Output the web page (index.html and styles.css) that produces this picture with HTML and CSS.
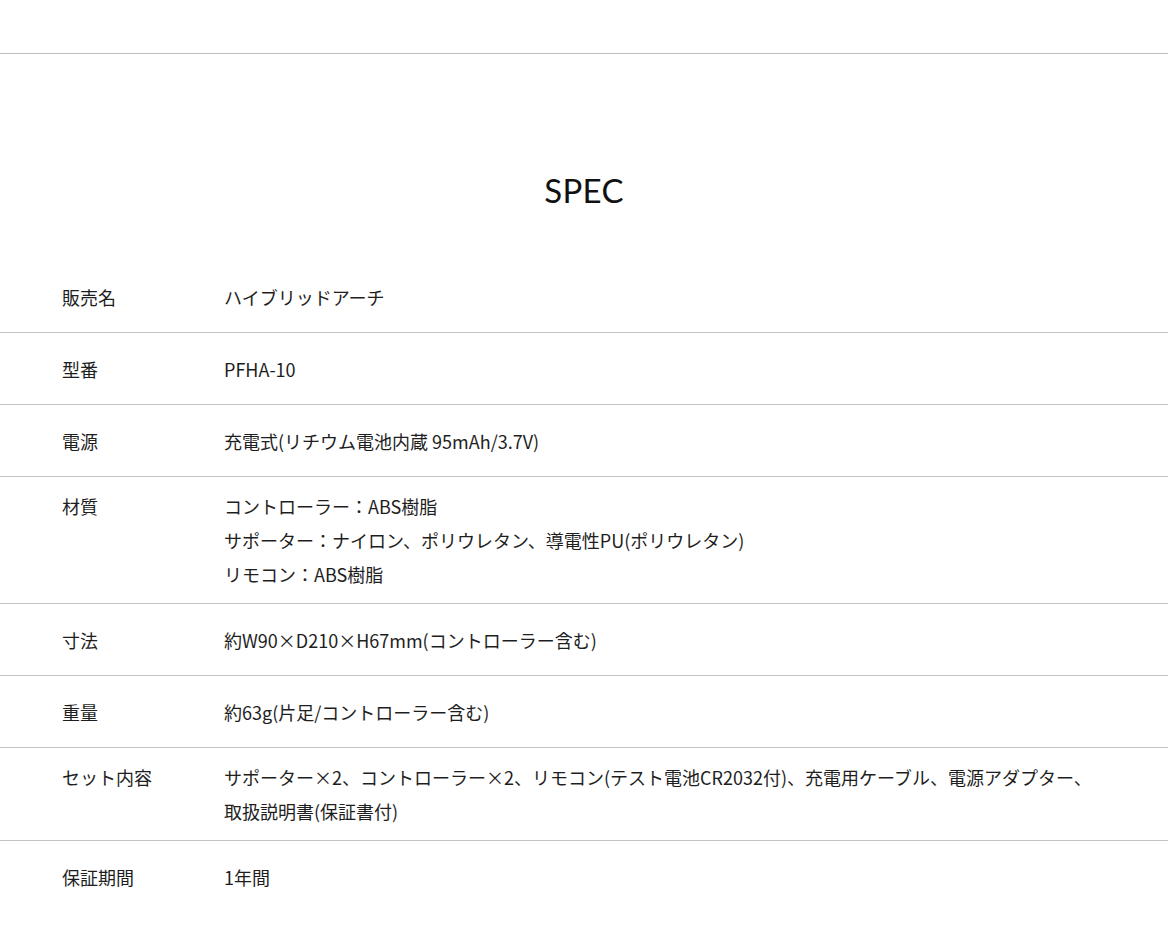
FILE: index.html
```html
<!DOCTYPE html>
<html lang="ja">
<head>
<meta charset="utf-8">
<title>SPEC</title>
<link rel="stylesheet" href="styles.css">
</head>
<body>
<header class="top-bar"></header>
<main class="spec">
  <h2 class="spec-title">SPEC</h2>
  <dl class="spec-list">
    <div class="spec-row">
      <dt class="spec-label">販売名</dt>
      <dd class="spec-value">ハイブリッドアーチ</dd>
    </div>
    <div class="spec-row">
      <dt class="spec-label">型番</dt>
      <dd class="spec-value">PFHA-10</dd>
    </div>
    <div class="spec-row">
      <dt class="spec-label">電源</dt>
      <dd class="spec-value">充電式(リチウム電池内蔵 95mAh/3.7V)</dd>
    </div>
    <div class="spec-row spec-row--multi">
      <dt class="spec-label">材質</dt>
      <dd class="spec-value">コントローラー：ABS樹脂<br>サポーター：ナイロン、ポリウレタン、導電性PU(ポリウレタン)<br>リモコン：ABS樹脂</dd>
    </div>
    <div class="spec-row">
      <dt class="spec-label">寸法</dt>
      <dd class="spec-value">約W90×D210×H67mm(コントローラー含む)</dd>
    </div>
    <div class="spec-row">
      <dt class="spec-label">重量</dt>
      <dd class="spec-value">約63g(片足/コントローラー含む)</dd>
    </div>
    <div class="spec-row spec-row--multi">
      <dt class="spec-label">セット内容</dt>
      <dd class="spec-value">サポーター×2、コントローラー×2、リモコン(テスト電池CR2032付)、充電用ケーブル、電源アダプター、<br>取扱説明書(保証書付)</dd>
    </div>
    <div class="spec-row spec-row--last">
      <dt class="spec-label">保証期間</dt>
      <dd class="spec-value">1年間</dd>
    </div>
  </dl>
</main>
</body>
</html>
```

FILE: styles.css
```css
html, body {
  margin: 0;
  padding: 0;
  background: #fff;
}

body {
  font-family: "Noto Sans CJK JP", "Noto Sans", sans-serif;
  color: #1e1e1e;
}

.top-bar {
  height: 53px;
  border-bottom: 1px solid #bdbdbd;
}

.spec {
  padding-top: 116px;
}

.spec-title {
  margin: 0;
  font-family: Lato, "Noto Sans", sans-serif;
  font-weight: 400;
  font-size: 33px;
  line-height: 40px;
  text-align: center;
  letter-spacing: 0.3px;
  color: #111;
}

.spec-list {
  margin: 51px 0 0;
  padding: 0;
}

.spec-row {
  display: grid;
  grid-template-columns: 162px 1fr;
  align-items: center;
  box-sizing: border-box;
  min-height: 72px;
  padding: 12px 62px;
  border-bottom: 1px solid #c4c4c4;
  font-size: 18px;
  line-height: 34px;
}

.spec-row--last {
  border-bottom: none;
}

.spec-row--multi .spec-label {
  align-self: start;
}

.spec-label,
.spec-value {
  margin: 0;
}
```
